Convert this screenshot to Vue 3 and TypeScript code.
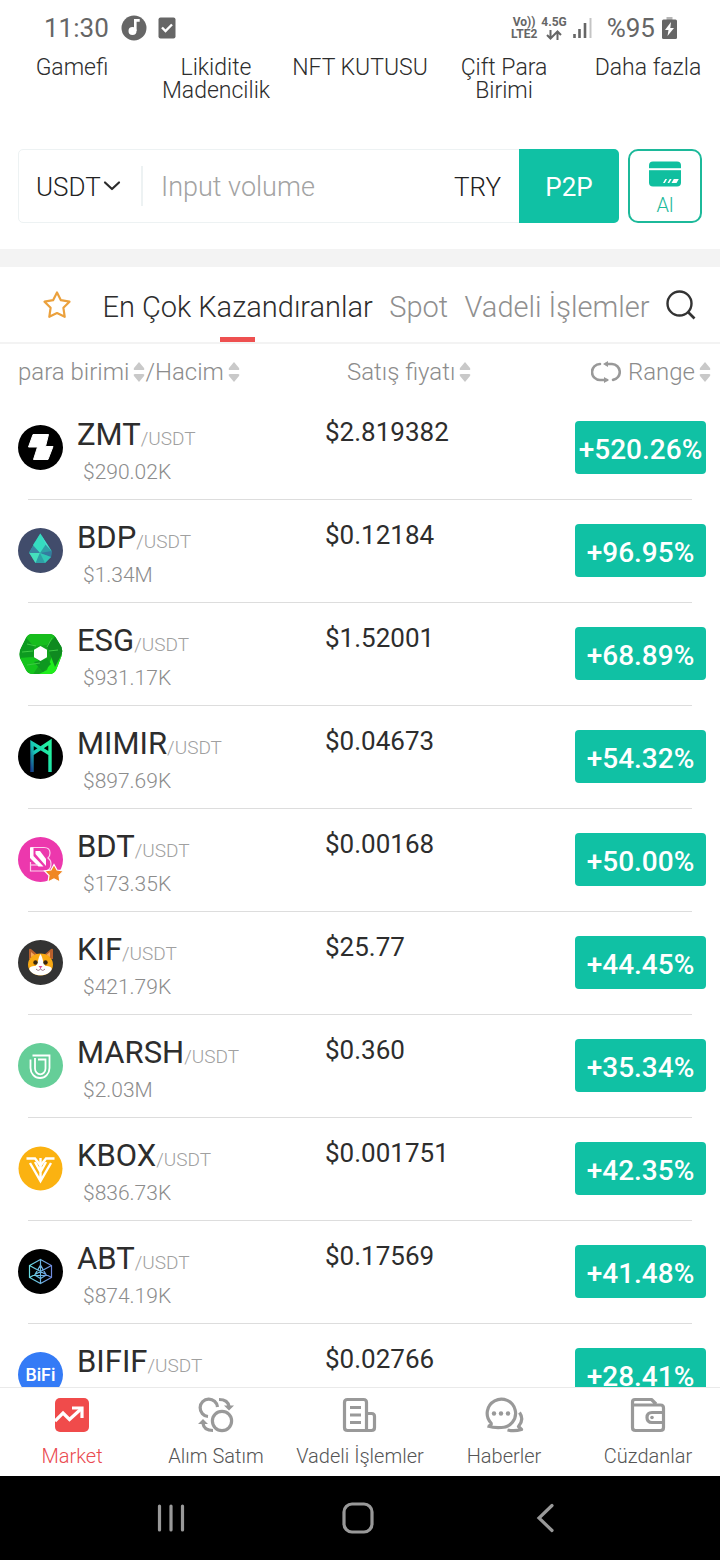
<script setup lang="ts">
import { ref } from 'vue'

interface Coin {
  symbol: string
  volume?: string
  price: string
  change: string
}

const shortcuts: string[] = ['Gamefi', 'Likidite Madencilik', 'NFT KUTUSU', 'Çift Para Birimi', 'Daha fazla']
const tabs: string[] = ['En Çok Kazandıranlar', 'Spot', 'Vadeli İşlemler']
const activeTab = ref<string>(tabs[0])
const currency = ref<string>('USDT')
const amount = ref<string>('')

const coins: Coin[] = [
  { symbol: 'ZMT', volume: '$290.02K', price: '$2.819382', change: '+520.26%' },
  { symbol: 'BDP', volume: '$1.34M', price: '$0.12184', change: '+96.95%' },
  { symbol: 'ESG', volume: '$931.17K', price: '$1.52001', change: '+68.89%' },
  { symbol: 'MIMIR', volume: '$897.69K', price: '$0.04673', change: '+54.32%' },
  { symbol: 'BDT', volume: '$173.35K', price: '$0.00168', change: '+50.00%' },
  { symbol: 'KIF', volume: '$421.79K', price: '$25.77', change: '+44.45%' },
  { symbol: 'MARSH', volume: '$2.03M', price: '$0.360', change: '+35.34%' },
  { symbol: 'KBOX', volume: '$836.73K', price: '$0.001751', change: '+42.35%' },
  { symbol: 'ABT', volume: '$874.19K', price: '$0.17569', change: '+41.48%' },
  { symbol: 'BIFIF', price: '$0.02766', change: '+28.41%' },
]
</script>

<template>
  <div class="screen">
    <header class="status">
      <span class="clock">11:30</span>
      <svg class="music" viewBox="0 0 26 26" aria-hidden="true">
        <circle cx="13" cy="13" r="12.5" fill="#666" />
        <circle cx="11.5" cy="16" r="3" fill="#fff" stroke="#fff" stroke-width="2" />
        <path d="M14.300 16V5.400h4.400" fill="none" stroke="#fff" stroke-width="2.600" />
      </svg>
      <svg class="task" viewBox="0 0 18 22" aria-hidden="true">
        <rect x="0.5" y="0.5" width="17" height="21" rx="2" fill="#666" />
        <path d="M4 10.5l3.5 3.5 6.5-6.5" fill="none" stroke="#fff" stroke-width="2.4" />
      </svg>
      <span class="spacer"></span>
      <span class="network"><span>Vo))</span><span>LTE2</span></span>
      <span class="network">
        <span>4.5G</span>
        <svg class="arrows" viewBox="0 0 16 10" aria-hidden="true">
          <path d="M4.500 0v8M1 5l3.500 3.500L8 5M11.500 10V2M8 5l3.500-3.500L15 5" fill="none" stroke="#666" stroke-width="2" />
        </svg>
      </span>
      <svg class="signal" viewBox="0 0 19 20" aria-hidden="true">
        <path d="M1.500 16v4M6.500 11v9M12 5v15" stroke="#666" stroke-width="2.600" />
        <path d="M17.500 0v20" stroke="#c4c4c4" stroke-width="2" />
      </svg>
      <span class="battery-text">%95</span>
      <svg class="battery" viewBox="0 0 15 22" aria-hidden="true">
        <path d="M4.500 0h6v3h-6z" fill="#b5b5b5" />
        <rect y="2.500" width="15" height="19.500" rx="1.500" fill="#666" />
        <path d="M9 5L3 13h3.500L5.500 19 12 11H8.300z" fill="#fff" />
      </svg>
    </header>

    <nav class="shortcuts" aria-label="Kısayollar">
      <a v-for="item in shortcuts" :key="item" href="#">{{ item }}</a>
    </nav>

    <form class="exchange" @submit.prevent>
      <div class="field">
        <select v-model="currency" class="currency" aria-label="Para birimi">
          <option>USDT</option>
        </select>
        <svg class="chevron" viewBox="0 0 18 12" aria-hidden="true">
          <path d="M2 2.500l7 6.500 7-6.500" fill="none" stroke="#2b2b2b" stroke-width="2.200" stroke-linecap="round" stroke-linejoin="round" />
        </svg>
        <input v-model="amount" class="amount" type="text" placeholder="Input volume" aria-label="Input volume" />
        <span class="fiat">TRY</span>
        <button class="p2p" type="submit">P2P</button>
      </div>
      <button class="buy" type="button">
        <svg viewBox="0 0 34 26" aria-hidden="true">
          <rect x="1" y="0.500" width="32" height="25" rx="4" fill="#10bf9f" />
          <path d="M1 8.200h32" stroke="#fff" stroke-width="2" />
          <path d="M15 22l2.300-4h1.800l-2.300 4zM19.500 22l2.300-4h1.800l-2.300 4zM23.500 22l2.300-4h5l-2.300 4z" fill="#fff" />
        </svg>
        <span>Al</span>
      </button>
    </form>

    <div class="band"></div>

    <nav class="tabs" aria-label="Piyasalar">
      <button class="icon-button" type="button" aria-label="Favoriler">
        <svg class="star" viewBox="0 0 30 30" aria-hidden="true">
          <path d="M15 2.500l3.900 7.700 8.600 1.500-6.100 6.100 1.300 9L15 23.100l-7.700 3.700 1.300-9-6.100-6.100 8.600-1.500z" fill="none" stroke="#eba13d" stroke-width="2.200" stroke-linejoin="round" />
        </svg>
      </button>
      <button
        v-for="tab in tabs"
        :key="tab"
        type="button"
        class="tab"
        :class="{ active: tab === activeTab }"
        @click="activeTab = tab"
      >{{ tab }}</button>
      <button class="icon-button search" type="button" aria-label="Ara">
        <svg viewBox="0 0 30 30" aria-hidden="true">
          <circle cx="13.500" cy="13.500" r="12" fill="none" stroke="#333" stroke-width="2.400" />
          <path d="M22 22l6.500 6.500" stroke="#333" stroke-width="2.600" />
        </svg>
      </button>
    </nav>

    <main class="market">
      <table>
        <thead>
          <tr>
            <th scope="col">
              <button type="button" class="sort">para birimi
                <svg viewBox="0 0 12 20" aria-hidden="true"><path d="M6 0l5 6q1 2-1 2H2Q0 8 1 6zM6 20l5-6q1-2-1-2H2q-2 0-1 2z" /></svg>
              </button><button type="button" class="sort">/Hacim
                <svg viewBox="0 0 12 20" aria-hidden="true"><path d="M6 0l5 6q1 2-1 2H2Q0 8 1 6zM6 20l5-6q1-2-1-2H2q-2 0-1 2z" /></svg>
              </button>
            </th>
            <th scope="col" class="price-head">
              <button type="button" class="sort">Satış fiyatı
                <svg viewBox="0 0 12 20" aria-hidden="true"><path d="M6 0l5 6q1 2-1 2H2Q0 8 1 6zM6 20l5-6q1-2-1-2H2q-2 0-1 2z" /></svg>
              </button>
            </th>
            <th scope="col" class="range-head">
              <button type="button" class="sort">
                <svg class="cycle" viewBox="0 0 30 22" aria-hidden="true">
                  <path d="M9 3A8 8 0 0 0 9 19h7M15 3h6a8 8 0 0 1 1 15.900" fill="none" stroke="#999" stroke-width="2.600" stroke-linecap="round" />
                  <path d="M17 0v6l-5-3zM13 16v6l5-3z" fill="#999" />
                </svg>
                Range
                <svg viewBox="0 0 12 20" aria-hidden="true"><path d="M6 0l5 6q1 2-1 2H2Q0 8 1 6zM6 20l5-6q1-2-1-2H2q-2 0-1 2z" /></svg>
              </button>
            </th>
          </tr>
        </thead>
        <tbody>
          <tr v-for="coin in coins" :key="coin.symbol">
            <td class="coin">
              <svg class="logo" viewBox="0 0 45 45" aria-hidden="true">
                <template v-if="coin.symbol === 'ZMT'">
                  <circle cx="22.500" cy="22.500" r="22.500" fill="#000" />
                  <path d="M15 9.500h15.500l-3 12h7.500l-5 13H15.500l4-12.500H10.500z" fill="#fff" stroke="#fff" stroke-linejoin="round" />
                </template>
                <template v-else-if="coin.symbol === 'BDP'">
                  <circle cx="22.500" cy="22.500" r="22.500" fill="#414c6b" />
                  <path d="M22.300 5.500L33.700 23l-.7 6-6 6h-9.500L11 24.500z" fill="#2f9fa6" />
                  <path d="M22.300 5.500L15 17l7 8 6-9z" fill="#35dcc0" />
                  <path d="M22.300 5.500L33.500 23 28 17z" fill="#4be3cf" />
                  <path d="M11 24.500h11L17.500 35z" fill="#45e0bd" />
                  <path d="M22 25l11.700-2-.7 6z" fill="#347ba0" />
                  <path d="M22 25l11 4-6 6z" fill="#31c6b5" />
                  <path d="M15 18l7 7H11z" fill="#3a82a1" />
                </template>
                <template v-else-if="coin.symbol === 'ESG'">
                  <defs>
                    <clipPath id="ring">
                      <path d="M14 3h17q5 0 7 4l5.500 9q1.500 4 0 9l-5 13q-2 5-7 5H15q-5 0-7-4L2 27q-1-4 0-8L8 7q2-4 6-4z" />
                    </clipPath>
                  </defs>
                  <g clip-path="url(#ring)">
                    <path d="M0 0h45v45H0z" fill="#12a51d" />
                    <path d="M6 0h36l-13 14-12 1-8-4z" fill="#17bd1d" />
                    <path d="M6 4l10 12-1 10-15 2z" fill="#0d9a20" />
                    <path d="M0 27l15-1 8 5-9 14H0z" fill="#14c41c" />
                    <path d="M45 18v27H17l12-6 5-14z" fill="#20ee1c" />
                    <path d="M29 15l9-10 8 14-9 17-5-13z" fill="#0f8a20" />
                    <path d="M16 31l13-3 4 5-8 8z" fill="#0e9820" />
                    <path d="M9 13l9 2M4 21l11-1M9 34l13-2M34 7l-5 9M40 19l-9 1" stroke="#3fc945" fill="none" />
                  </g>
                  <path d="M22.500 15l6.500 3.800v7.400L22.500 30 16 26.200v-7.400z" fill="#fff" />
                </template>
                <template v-else-if="coin.symbol === 'MIMIR'">
                  <defs>
                    <linearGradient id="rune" x1="0" y1="1" x2="1" y2="0.400">
                      <stop offset="0" stop-color="#173f8c" />
                      <stop offset="0.400" stop-color="#18c8b8" />
                      <stop offset="1" stop-color="#22f0a0" />
                    </linearGradient>
                  </defs>
                  <circle cx="22.500" cy="22.500" r="22.500" fill="#000" />
                  <path d="M14 38V9l18 11M32 38V8L14 20" fill="none" stroke="url(#rune)" stroke-width="3.400" />
                </template>
                <template v-else-if="coin.symbol === 'BDT'">
                  <circle cx="22.500" cy="22.500" r="22.500" fill="#ec38ad" />
                  <path d="M12.500 10.500H26q6 0 6 5.500 0 3-2 5 3 2 3 6 0 7-7 7H12.500V25" fill="none" stroke="#fbd0ec" stroke-width="1.200" />
                  <path d="M12 10.500h3.500v8.500l10 10.500h-5L12 21z" fill="#fff" />
                  <path d="M17.500 14h4.500l6 8v7l-10.500-12z" fill="#fff" />
                  <path d="M13 28h7" stroke="#fbd0ec" stroke-width="1.200" />
                  <path d="M36 27.500l3 5.500 6.500 1-4.500 4.500 1 6.500-6-3-6 3 1-6.500-4.500-4.500L33 33z" fill="#f08722" stroke="#fff" stroke-width="1.200" />
                </template>
                <template v-else-if="coin.symbol === 'KIF'">
                  <circle cx="22.500" cy="22.500" r="22.500" fill="#333" />
                  <path d="M11 19V10q0-2 2-1l7 6h6l7-6q2-1 2 1v9z" fill="#b9602c" />
                  <path d="M13 17v-5l5 4M32 17v-5l-5 4" fill="#f6a85e" />
                  <ellipse cx="22.500" cy="24.500" rx="12.500" ry="11" fill="#f9a913" />
                  <path d="M22.500 14c-3 5-2 9-5 12-4 0-7 1-6 4 4 7 18 7 22 0 1-3-2-4-6-4-3-3-2-7-5-12z" fill="#fff" />
                  <circle cx="17.500" cy="22.500" r="2.200" fill="#382711" />
                  <circle cx="27.500" cy="22.500" r="2.200" fill="#382711" />
                  <path d="M20.500 26h4L22.500 28.500z" fill="#dd4d94" />
                  <path d="M18 29q3 3 4.500-.5Q24 32 27 29" fill="none" stroke="#9f7885" />
                </template>
                <template v-else-if="coin.symbol === 'MARSH'">
                  <circle cx="22.500" cy="22.500" r="22.500" fill="#65ce98" />
                  <path d="M14.500 12.500h17v12.500a9.500 10 0 0 1-19 0V16.500" fill="none" stroke="#fff" stroke-width="1.800" />
                  <path d="M20 16.500h7.500v9a5 5.500 0 0 1-10.500 0V15" fill="none" stroke="#fff" stroke-width="1.800" />
                </template>
                <template v-else-if="coin.symbol === 'KBOX'">
                  <circle cx="22.500" cy="22.500" r="22" fill="#fbb211" />
                  <path d="M8.500 12.500h8.500l5.500 7 5.500-7h8.500" fill="none" stroke="#fff" stroke-width="2.400" />
                  <path d="M22.500 12v22M12 17l10.500 18L33 17M17 16l5.500 10L28 16" fill="none" stroke="#fff" stroke-width="2.400" />
                </template>
                <template v-else-if="coin.symbol === 'ABT'">
                  <defs>
                    <linearGradient id="hex" x1="0" y1="0" x2="1" y2="0">
                      <stop offset="0" stop-color="#69dce2" />
                      <stop offset="1" stop-color="#718ce0" />
                    </linearGradient>
                  </defs>
                  <circle cx="22.500" cy="22.500" r="22.500" fill="#000" />
                  <path d="M22.500 10.500L33.500 16.500v12l-11 6-11-6v-12zM22.500 10.500v24M11.500 16.500l22 12M33.500 16.500l-22 12M22.500 16l-6 10.500h12zM17.500 26.500l5 3 5-3" fill="none" stroke="url(#hex)" stroke-width="1.200" />
                </template>
                <template v-else>
                  <circle cx="22.500" cy="22.500" r="22.500" fill="#347bf6" />
                  <text x="22.500" y="29" text-anchor="middle" class="logo-text">BiFi</text>
                </template>
              </svg>
              <div class="names">
                <div class="pair"><strong>{{ coin.symbol }}</strong><span>/USDT</span></div>
                <div v-if="coin.volume" class="volume">{{ coin.volume }}</div>
              </div>
            </td>
            <td class="price">{{ coin.price }}</td>
            <td class="change"><span>{{ coin.change }}</span></td>
          </tr>
        </tbody>
      </table>
    </main>

    <nav class="bottom" aria-label="Ana menü">
      <a href="#" class="current">
        <svg viewBox="0 0 36 36" aria-hidden="true">
          <rect x="1" y="1" width="34" height="34" rx="5" fill="#f04b4b" />
          <path d="M1 24l8-8 6.500 6.500L27 12" fill="none" stroke="#fff" stroke-width="3.200" />
          <path d="M18 11h10v10" fill="none" stroke="#fff" stroke-width="3.200" />
        </svg>
        <span>Market</span>
      </a>
      <a href="#">
        <svg viewBox="0 0 36 36" aria-hidden="true">
          <g fill="none" stroke="#999" stroke-width="3.200">
            <path d="M10 19.500A8.700 8.700 0 1 1 19.500 10" />
            <circle cx="24" cy="24" r="9.600" />
            <path d="M21 2.500q9 0 10 7M15 33.500q-9 0-10-7" />
          </g>
          <path d="M26 8.500l10 0-5 5zM10 27H0l5-5z" fill="#999" />
        </svg>
        <span>Alım Satım</span>
      </a>
      <a href="#">
        <svg viewBox="0 0 36 36" aria-hidden="true">
          <path d="M24.500 33.500h-19Q2.500 33.500 2.500 30.500v-25Q2.500 2.500 5.500 2.500h16q3 0 3 3zM24.500 16.500h5q3 0 3 3v11q0 3-3 3h-5M8 10.500h11M8 18h11M8 25.500h11" fill="none" stroke="#999" stroke-width="3.200" />
        </svg>
        <span>Vadeli İşlemler</span>
      </a>
      <a href="#">
        <svg class="wide" viewBox="0 0 40 36" aria-hidden="true">
          <path d="M5 29q3-1 2-3A14.200 14.200 0 1 1 17 30.500Q10 31 3.500 29M35.500 15.500q5 7-1 14l3 3q-7 2-14 .5" fill="none" stroke="#999" stroke-width="3.200" stroke-linejoin="round" />
          <g fill="#999"><circle cx="10" cy="16.500" r="2.200" /><circle cx="17" cy="16.500" r="2.200" /><circle cx="24" cy="16.500" r="2.200" /></g>
        </svg>
        <span>Haberler</span>
      </a>
      <a href="#">
        <svg viewBox="0 0 36 36" aria-hidden="true">
          <path d="M2.500 8v22.500q0 3 3 3h25q3 0 3-3V11q0-3-3-3zM2.500 8V5q0-2.500 2.500-2.500h16.500L26 7M33.500 15.500H22q-5 0-5 5t5 5h11.500" fill="none" stroke="#999" stroke-width="3.200" stroke-linejoin="round" />
          <circle cx="22" cy="20.500" r="1.800" fill="#999" />
        </svg>
        <span>Cüzdanlar</span>
      </a>
    </nav>

    <footer class="system">
      <button type="button" aria-label="Son uygulamalar">
        <svg viewBox="0 0 32 32" aria-hidden="true"><path d="M4.500 4v24M16 4v24M27.500 4v24" /></svg>
      </button>
      <button type="button" aria-label="Ana ekran">
        <svg viewBox="0 0 32 32" aria-hidden="true"><rect x="2" y="2" width="28" height="28" rx="8" /></svg>
      </button>
      <button type="button" aria-label="Geri">
        <svg viewBox="0 0 32 32" aria-hidden="true"><path d="M23 3.500L10 16l13 12.500" /></svg>
      </button>
    </footer>
  </div>
</template>

<style>
body {
  margin: 0;
  background: #fff;
}
</style>

<style scoped>
.screen {
  display: flex;
  flex-direction: column;
  height: 100vh;
  overflow: hidden;
  background: #fff;
  color: #2d2d2d;
  font-family: Roboto, "Open Sans", sans-serif;
  font-weight: 300;
}

button,
input,
select {
  margin: 0;
  padding: 0;
  border: 0;
  background: none;
  color: inherit;
  font: inherit;
}

svg {
  display: block;
  flex: none;
}

a {
  color: inherit;
  text-decoration: none;
}

.status {
  display: flex;
  flex: none;
  align-items: center;
  height: 56px;
  padding: 0 43px 0 44px;
  color: #666;
  font-size: 26px;
  font-weight: 400;
}

.music {
  width: 26px;
  height: 26px;
  margin-left: 12px;
}

.task {
  width: 18px;
  height: 22px;
  margin-left: 11px;
}

.spacer {
  flex: 1;
}

.network {
  display: flex;
  flex-direction: column;
  align-items: center;
  margin-right: 4px;
  font-size: 12px;
  font-weight: 700;
  line-height: 12px;
}

.arrows {
  width: 16px;
  height: 10px;
  margin-top: 2px;
}

.signal {
  width: 19px;
  height: 20px;
  margin: 0 15px 0 2px;
}

.battery {
  width: 15px;
  height: 22px;
  margin-left: 7px;
}

.shortcuts {
  display: grid;
  flex: none;
  grid-template-columns: repeat(5, 1fr);
  height: 93px;
  font-size: 23px;
  line-height: 23px;
  text-align: center;
}

.exchange {
  display: flex;
  flex: none;
  gap: 9px;
  height: 74px;
  padding: 0 18px 26px;
}

.field {
  display: flex;
  flex: 1;
  align-items: center;
  box-sizing: border-box;
  min-width: 0;
  border: 1px solid #edf2f3;
  border-radius: 5px;
  font-size: 26px;
}

.currency {
  padding: 2px 0 0 17px;
  appearance: none;
  color: #222;
}

.chevron {
  width: 18px;
  height: 12px;
  margin: 0 20px 0 2px;
}

.amount {
  box-sizing: border-box;
  flex: 1;
  min-width: 0;
  height: 40px;
  padding: 2px 0 0 18px;
  border-left: 2px solid #edf2f3;
  outline: 0;
  font-size: 27px;
}

.amount::placeholder {
  color: #a3a3a3;
  opacity: 1;
}

.fiat {
  margin-right: 19px;
  padding-top: 2px;
  color: #222;
}

.p2p {
  width: 100px;
  height: 74px;
  margin: -1px;
  padding-top: 2px;
  border-radius: 0 5px 5px 0;
  background: #10c1a4;
  color: #fff;
  font-weight: 400;
}

.buy {
  display: flex;
  flex-direction: column;
  align-items: center;
  box-sizing: border-box;
  width: 74px;
  height: 74px;
  padding-top: 10px;
  border: 2px solid #1cb99a;
  border-radius: 10px;
  color: #1cb99a;
  font-size: 20px;
  line-height: 24px;
}

.buy svg {
  width: 34px;
  height: 26px;
  margin-bottom: 6px;
}

.band {
  flex: none;
  height: 18px;
  background: #f3f3f3;
}

.tabs {
  display: flex;
  flex: none;
  justify-content: space-between;
  height: 75px;
  padding: 0 24px 0 42px;
  border-bottom: 2px solid #f3f3f3;
  color: #8f8f8f;
  font-size: 29px;
}

.icon-button svg {
  width: 30px;
  height: 30px;
}

.star {
  margin-right: 14px;
}

.tab {
  position: relative;
  padding-top: 5px;
  white-space: nowrap;
}

.tab.active {
  color: #2d2d2d;
}

.tab.active::after {
  position: absolute;
  bottom: 0;
  left: 50%;
  width: 35px;
  height: 5px;
  margin-left: -18px;
  background: #ee5050;
  content: "";
}

.market {
  flex: 1;
  min-height: 0;
  overflow: hidden;
}

table,
thead,
tbody {
  display: block;
}

tr {
  display: grid;
  grid-template-columns: 325fr 250fr 145fr;
}

th,
td {
  padding: 0;
  text-align: left;
}

th {
  display: flex;
  box-sizing: border-box;
  height: 53px;
  padding-top: 2px;
  color: #8c8c8c;
  font-size: 24px;
  font-weight: 300;
}

th:first-child {
  padding-left: 18px;
}

.sort {
  display: flex;
  gap: 4px;
  align-items: center;
  white-space: nowrap;
}

.sort svg {
  width: 12px;
  height: 20px;
  fill: #c9c9c9;
}

.sort .cycle {
  width: 30px;
  height: 22px;
  margin-right: 3px;
}

.price-head {
  padding-left: 22px;
}

.range-head {
  justify-content: flex-end;
  padding-right: 9px;
}

tbody tr::after {
  grid-column: 1 / -1;
  height: 1px;
  margin: 0 28px;
  background: #ddd;
  content: "";
}

.coin {
  display: flex;
  height: 102px;
  padding-left: 18px;
}

.logo {
  width: 45px;
  height: 45px;
  margin: 28px 14px 0 0;
}

.logo-text {
  fill: #fff;
  font-family: Inter, sans-serif;
  font-size: 17px;
  font-weight: 600;
}

.names {
  padding-top: 20px;
}

.pair {
  line-height: 36px;
  white-space: nowrap;
}

.pair strong {
  font-size: 31px;
  font-weight: 400;
}

.pair span {
  color: #a0a0a0;
  font-size: 19px;
}

.volume {
  padding: 1px 0 0 6px;
  color: #8c8c8c;
  font-size: 21px;
  line-height: 26px;
}

.price {
  padding-top: 18px;
  font-size: 26px;
  font-weight: 400;
  line-height: 34px;
}

.change {
  padding: 24px 14px 0 0;
}

.change span {
  display: block;
  height: 51px;
  padding-top: 2px;
  border-radius: 4px;
  background: #10c1a4;
  color: #fff;
  font-size: 28px;
  font-weight: 500;
  line-height: 53px;
  text-align: center;
}

.bottom {
  display: grid;
  flex: none;
  grid-template-columns: repeat(5, 1fr);
  height: 88px;
  border-top: 1px solid #eaeaea;
  color: #555;
  font-size: 20px;
  line-height: 24px;
}

.bottom a {
  display: flex;
  flex-direction: column;
  gap: 11px;
  align-items: center;
  padding-top: 9px;
  white-space: nowrap;
}

.bottom svg {
  width: 36px;
  height: 36px;
}

.bottom .wide {
  width: 40px;
}

.bottom .current {
  color: #ea4a50;
}

.system {
  display: flex;
  flex: none;
  align-items: center;
  justify-content: space-evenly;
  height: 84px;
  padding: 0 4px 0 0;
  background: #000;
}

.system svg {
  width: 32px;
  height: 32px;
  fill: none;
  stroke: #999;
  stroke-width: 3.2;
  stroke-linecap: round;
}
</style>
